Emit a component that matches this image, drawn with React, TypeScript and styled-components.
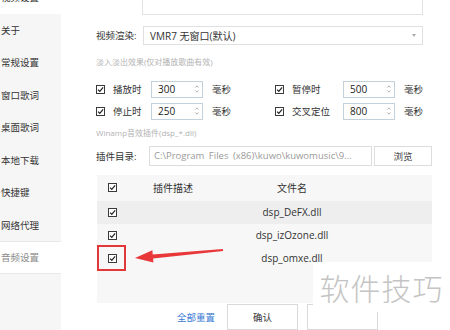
import React from "react";
import styled, { createGlobalStyle } from "styled-components";

const GlobalStyle = createGlobalStyle`
  html, body {
    margin: 0;
    padding: 0;
    background: #ffffff;
  }
  body {
    font-family: "Open Sans", "Noto Sans CJK SC", sans-serif;
    color: #333;
  }
`;

const Frame = styled.div`
  position: relative;
  width: 450px;
  height: 330px;
  overflow: hidden;
  display: flex;
  background: #fff;
`;

const Sidebar = styled.div`
  width: 61px;
  flex-shrink: 0;
  margin-top: -19px;
  background: #f6f6f6;
  display: flex;
  flex-direction: column;
`;

const NavItem = styled.div<{ $active?: boolean; $muted?: boolean }>`
  height: 32.5px;
  box-sizing: border-box;
  display: flex;
  align-items: center;
  padding-left: 1px;
  font-size: 9.5px;
  color: ${(p) => (p.$muted ? "#8a8a8a" : "#333")};
  background: ${(p) => (p.$active ? "#fff" : "transparent")};
  border-top: ${(p) => (p.$muted ? "1px solid #e9e9e9" : "none")};
  border-bottom: ${(p) => (p.$muted ? "1px solid #e9e9e9" : "none")};
  white-space: nowrap;
`;

const Main = styled.div`
  flex: 1;
  padding-left: 35px;
  display: flex;
  flex-direction: column;
  font-size: 9.5px;
`;

const TopBox = styled.div`
  margin-top: -5px;
  margin-left: 46px;
  width: 281px;
  height: 21px;
  box-sizing: border-box;
  border: 1px solid #e2e2e2;
  border-top: none;
`;

const FieldRow = styled.div<{ $top: number }>`
  display: flex;
  align-items: center;
  margin-top: ${(p) => p.$top}px;
`;

const Label = styled.span<{ $w: number }>`
  width: ${(p) => p.$w}px;
  flex-shrink: 0;
  font-size: 9.5px;
  color: #333;
  white-space: nowrap;
`;

const Select = styled.div`
  position: relative;
  width: 280px;
  height: 19px;
  box-sizing: border-box;
  border: 1px solid #e0e0e0;
  display: flex;
  align-items: center;
  padding-left: 6px;
  font-size: 10px;
  color: #333;
`;

const Caret = styled.span`
  margin-left: auto;
  margin-right: 6px;
  width: 0;
  height: 0;
  border-left: 2.5px solid transparent;
  border-right: 2.5px solid transparent;
  border-top: 3px solid #aaa;
`;

const Hint = styled.div<{ $top: number }>`
  margin-top: ${(p) => p.$top}px;
  height: 12px;
  line-height: 12px;
  font-size: 8px;
  color: #b3b3b3;
  white-space: nowrap;
`;

const OptionRow = styled.div<{ $top: number }>`
  display: flex;
  margin-top: ${(p) => p.$top}px;
  height: 17px;
`;

const OptionGroup = styled.div<{ $w: number; $label: number }>`
  width: ${(p) => p.$w}px;
  display: grid;
  grid-template-columns: 9px 8px ${(p) => p.$label}px 52px 9px auto;
  align-items: center;
`;

const Box = styled.span<{ $size?: number }>`
  width: ${(p) => p.$size ?? 9}px;
  height: ${(p) => p.$size ?? 9}px;
  box-sizing: border-box;
  border: 1px solid #3a3a3a;
  background: #fff;
  display: inline-flex;
  align-items: center;
  justify-content: center;
`;

const Spin = styled.div`
  grid-column: 4;
  height: 17px;
  box-sizing: border-box;
  border: 1px solid #c3d1dc;
  display: flex;
  align-items: center;
  padding-left: 6px;
  font-size: 10px;
  color: #222;
`;

const Arrows = styled.span`
  margin-left: auto;
  margin-right: 3px;
  display: flex;
  flex-direction: column;
  gap: 2px;
`;

const Unit = styled.span`
  grid-column: 6;
  font-size: 9.5px;
  color: #333;
`;

const PathInput = styled.div`
  width: 223px;
  height: 20px;
  box-sizing: border-box;
  border: 1px solid #dcdcdc;
  display: flex;
  align-items: center;
  padding-left: 4px;
  font-size: 9.5px;
  color: #9a9a9a;
  white-space: nowrap;
  overflow: hidden;
  word-spacing: 2px;
`;

const Button = styled.div<{ $w: number }>`
  width: ${(p) => p.$w}px;
  height: 20px;
  box-sizing: border-box;
  border: 1px solid #dcdcdc;
  background: #fff;
  display: flex;
  align-items: center;
  justify-content: center;
  font-size: 9.5px;
  color: #444;
  flex-shrink: 0;
`;

const Table = styled.div`
  margin-top: 9px;
  margin-left: 1px;
  width: 335px;
  height: 136px;
  background: #f7f7f7;
  display: flex;
  flex-direction: column;
`;

const TRow = styled.div<{ $h: number; $shade?: boolean }>`
  height: ${(p) => p.$h}px;
  display: grid;
  grid-template-columns: 56px 100px 78px 1fr;
  align-items: center;
  background: ${(p) => (p.$shade ? "#eeeeee" : "transparent")};
`;

const Cell = styled.div<{ $center?: boolean }>`
  font-size: 10px;
  color: #333;
  white-space: nowrap;
  text-align: ${(p) => (p.$center ? "center" : "left")};
  display: flex;
  justify-content: ${(p) => (p.$center ? "center" : "flex-start")};
`;

const CheckCell = styled.div`
  padding-left: 11px;
  display: flex;
`;

const Footer = styled.div`
  display: flex;
  align-items: center;
  margin-top: 1px;
  padding-left: 81px;
  height: 26px;
`;

const Link = styled.span`
  font-size: 9.5px;
  color: #3a7bd5;
  margin-right: 12px;
  white-space: nowrap;
`;

const FootButton = styled.div`
  width: 71px;
  height: 26px;
  box-sizing: border-box;
  border: 1px solid #d9d9d9;
  background: #fff;
  display: flex;
  align-items: center;
  justify-content: center;
  font-size: 9.5px;
  color: #333;
  margin-right: 9px;
  flex-shrink: 0;
`;

const Watermark = styled.div`
  position: absolute;
  left: 313px;
  top: 262px;
  width: 137px;
  height: 50px;
  background: #fff;
  display: flex;
  align-items: center;
  justify-content: center;
  font-family: "Noto Sans CJK SC", sans-serif;
  font-weight: 300;
  font-size: 30px;
  letter-spacing: 1px;
  color: #c4c4c4;
`;

const Highlight = styled.div`
  position: absolute;
  left: 97px;
  top: 245px;
  width: 29px;
  height: 26px;
  box-sizing: border-box;
  border: 2px solid #e2383a;
`;

const Overlay = styled.svg`
  position: absolute;
  left: 0;
  top: 0;
  pointer-events: none;
`;

function Check({ size = 9 }: { size?: number }) {
  return (
    <Box $size={size}>
      <svg width={size - 2} height={size - 2} viewBox="0 0 8 8">
        <path d="M1.2 4.2 L3.2 6.2 L7 1.6" fill="none" stroke="#222" strokeWidth="1.4" />
      </svg>
    </Box>
  );
}

function Spinner({ value }: { value: string }) {
  return (
    <Spin>
      {value}
      <Arrows>
        <svg width="4" height="3" viewBox="0 0 4 3">
          <path d="M0.5 2.5 L2 0.8 L3.5 2.5" fill="none" stroke="#999" strokeWidth="0.8" />
        </svg>
        <svg width="4" height="3" viewBox="0 0 4 3">
          <path d="M0.5 0.5 L2 2.2 L3.5 0.5" fill="none" stroke="#999" strokeWidth="0.8" />
        </svg>
      </Arrows>
    </Spin>
  );
}

type Opt = { label: string; value: string };

function Option({ opt, width, labelW }: { opt: Opt; width: number; labelW: number }) {
  return (
    <OptionGroup $w={width} $label={labelW}>
      <Check />
      <span />
      <Label $w={labelW}>{opt.label}</Label>
      <Spinner value={opt.value} />
      <span />
      <Unit>毫秒</Unit>
    </OptionGroup>
  );
}

const navItems = ["关于", "常规设置", "窗口歌词", "桌面歌词", "本地下载", "快捷键", "网络代理"];

const plugins = [
  { file: "dsp_DeFX.dll", shade: true },
  { file: "dsp_izOzone.dll", shade: false },
  { file: "dsp_omxe.dll", shade: false },
];

export default function App() {
  return (
    <>
      <GlobalStyle />
      <Frame>
        <Sidebar>
          <NavItem $active>视频设置</NavItem>
          {navItems.map((n) => (
            <NavItem key={n}>{n}</NavItem>
          ))}
          <NavItem $active $muted>
            音频设置
          </NavItem>
        </Sidebar>

        <Main>
          <TopBox />
          <FieldRow $top={11}>
            <Label $w={47}>视频渲染:</Label>
            <Select>
              VMR7 无窗口(默认)
              <Caret />
            </Select>
          </FieldRow>

          <Hint $top={11}>淡入淡出效果(仅对播放歌曲有效)</Hint>

          <OptionRow $top={13}>
            <Option opt={{ label: "播放时", value: "300" }} width={179} labelW={38} />
            <Option opt={{ label: "暂停时", value: "500" }} width={160} labelW={51} />
          </OptionRow>
          <OptionRow $top={5}>
            <Option opt={{ label: "停止时", value: "250" }} width={179} labelW={38} />
            <Option opt={{ label: "交叉定位", value: "800" }} width={160} labelW={51} />
          </OptionRow>

          <Hint $top={7}>Winamp音效插件(dsp_*.dll)</Hint>

          <FieldRow $top={7}>
            <Label $w={53}>插件目录:</Label>
            <PathInput>{"C:\\Program Files (x86)\\kuwo\\kuwomusic\\9..."}</PathInput>
            <span style={{ width: 2 }} />
            <Button $w={58}>浏览</Button>
          </FieldRow>

          <Table>
            <TRow $h={26}>
              <CheckCell>
                <Check />
              </CheckCell>
              <Cell>插件描述</Cell>
              <Cell $center>文件名</Cell>
            </TRow>
            {plugins.map((p) => (
              <TRow key={p.file} $h={23} $shade={p.shade}>
                <CheckCell>
                  <Check />
                </CheckCell>
                <Cell />
                <Cell $center>{p.file}</Cell>
              </TRow>
            ))}
          </Table>

          <Footer>
            <Link>全部重置</Link>
            <FootButton>确认</FootButton>
            <FootButton />
          </Footer>
        </Main>

        <Highlight />
        <Overlay width="450" height="330" viewBox="0 0 450 330">
          <polygon
            points="135,258 153.4,262.6 153.1,258.4 223.1,250.9 222.9,249.1 152.7,254.4 152.4,250.2"
            fill="#e8383a"
          />
        </Overlay>
        <Watermark>软件技巧</Watermark>
      </Frame>
    </>
  );
}
